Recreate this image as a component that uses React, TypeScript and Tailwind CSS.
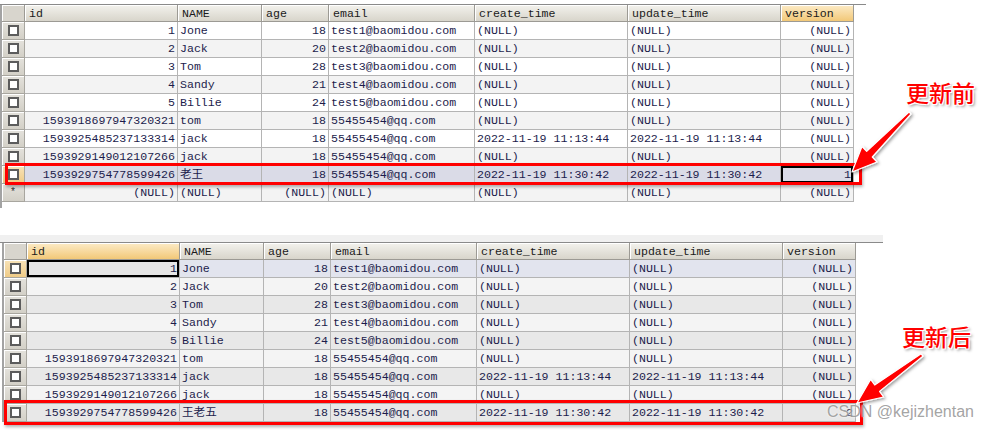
import React from 'react';

type Align = 'l' | 'r';

const columns: { name: string; align: Align }[] = [
  { name: 'id', align: 'r' },
  { name: 'NAME', align: 'l' },
  { name: 'age', align: 'r' },
  { name: 'email', align: 'l' },
  { name: 'create_time', align: 'l' },
  { name: 'update_time', align: 'l' },
  { name: 'version', align: 'r' },
];

const N = '(NULL)';

const baseRows: string[][] = [
  ['1', 'Jone', '18', 'test1@baomidou.com', N, N, N],
  ['2', 'Jack', '20', 'test2@baomidou.com', N, N, N],
  ['3', 'Tom', '28', 'test3@baomidou.com', N, N, N],
  ['4', 'Sandy', '21', 'test4@baomidou.com', N, N, N],
  ['5', 'Billie', '24', 'test5@baomidou.com', N, N, N],
  ['1593918697947320321', 'tom', '18', '55455454@qq.com', N, N, N],
  ['1593925485237133314', 'jack', '18', '55455454@qq.com', '2022-11-19 11:13:44', '2022-11-19 11:13:44', N],
  ['1593929149012107266', 'jack', '18', '55455454@qq.com', N, N, N],
];

const beforeRows = [
  ...baseRows,
  ['1593929754778599426', '老王', '18', '55455454@qq.com', '2022-11-19 11:30:42', '2022-11-19 11:30:42', '1'],
  [N, N, N, N, N, N, N],
];

const afterRows = [
  ...baseRows,
  ['1593929754778599426', '王老五', '18', '55455454@qq.com', '2022-11-19 11:30:42', '2022-11-19 11:30:42', '2'],
];

interface GridProps {
  rows: string[][];
  orangeCol: number;
  selRow: number;
  selCol: number;
  newRow?: boolean;
  variant: 'before' | 'after';
}

const Grid: React.FC<GridProps> = ({ rows, orangeCol, selRow, selCol, newRow, variant }) => {
  const rowBg = (i: number) => {
    if (i === selRow) return variant === 'before' ? 'bg-[#dadbe7]' : 'bg-[#e2e4ee]';
    if (variant === 'before') return i % 2 === 0 ? 'bg-white' : 'bg-[#f3f3f3]';
    return i % 2 === 0 ? 'bg-[#e8e8e8]' : 'bg-[#f4f4f4]';
  };

  return (
    <div className="grid grid-cols-[23px_153px_84px_67px_146px_153px_153px_73px] text-[11.6px] leading-[17px] text-[#1c1c4c]">
      <div className="h-[17px] border-r border-b border-[#9c9a94] bg-[#d8d5cd] shadow-[inset_1px_1px_0_#fff]" />
      {columns.map((c, ci) => (
        <div
          key={c.name}
          className={`h-[17px] pl-[4px] border-r border-b border-[#9c9a94] shadow-[inset_1px_1px_0_#fff] text-[#1a1a1a] ${
            ci === orangeCol
              ? 'bg-gradient-to-b from-[#fcebc6] to-[#f2c877]'
              : 'bg-gradient-to-b from-[#f3f2ed] to-[#d8d5cb]'
          }`}
        >
          {c.name}
        </div>
      ))}
      {rows.map((row, ri) => {
        const isNew = newRow && ri === rows.length - 1;
        return (
          <React.Fragment key={ri}>
            <div
              className={`h-[18px] border-r border-b border-[#a8a69f] shadow-[inset_1px_1px_0_#fff] flex items-center justify-center ${
                ri === selRow ? 'bg-gradient-to-b from-[#f8e3b8] to-[#efcb86]' : 'bg-gradient-to-b from-[#e4e2dc] to-[#d3d0c7]'
              }`}
            >
              {isNew ? (
                <span className="text-[10px] text-[#333] leading-none">*</span>
              ) : (
                <span className="w-[11px] h-[11px] border-2 border-[#5c5c5c] bg-white" />
              )}
            </div>
            {row.map((v, ci) => {
              const sel = ri === selRow && ci === selCol;
              return (
                <div
                  key={ci}
                  className={`h-[18px] border-r border-b border-[#b4b4b4] flex items-center overflow-hidden whitespace-nowrap ${
                    columns[ci].align === 'r' ? 'justify-end pr-[2px]' : 'pl-[2px]'
                  } ${sel ? 'shadow-[inset_0_0_0_2px_#000]' : ''} ${
                    sel && variant === 'after' ? 'bg-[#e6e6e6]' : rowBg(ri)
                  }`}
                >
                  {v}
                </div>
              );
            })}
          </React.Fragment>
        );
      })}
    </div>
  );
};

const Label: React.FC<{ text: string; className: string }> = ({ text, className }) => (
  <span
    className={`absolute font-['Noto_Sans_CJK_SC',sans-serif] font-medium text-[23px] leading-[24px] text-[#ff0000] [text-shadow:-1px_-1px_0_#fff,1px_-1px_0_#fff,-1px_1px_0_#fff,1px_1px_0_#fff,2px_2px_3px_rgba(0,0,0,0.45)] ${className}`}
  >
    {text}
  </span>
);

export default function App() {
  return (
    <div className="relative w-[987px] h-[432px] overflow-hidden bg-white font-['Liberation_Mono','Noto_Sans_CJK_SC',monospace]">
      {/* before update */}
      <div className="pt-[4px] h-[235px]">
        <div className="w-[866px] border-t border-[#8a8a8a]" />
        <div className="w-[856px] border-l-2 border-[#a3a3a3] pb-[6px]">
          <Grid rows={beforeRows} orangeCol={6} selRow={8} selCol={6} newRow variant="before" />
        </div>
      </div>

      {/* after update */}
      <div className="w-[883px] h-[7px] bg-[#f0f0f0]" />
      <div className="w-[883px] border-t border-[#8a8a8a]" />
      <div className="ml-[2px] w-[856px] border-l-2 border-[#a3a3a3]">
        <Grid rows={afterRows} orangeCol={0} selRow={0} selCol={0} variant="after" />
      </div>

      {/* annotations */}
      <div className="absolute left-[5px] top-[163px] w-[857px] h-[22px] border-[3px] border-[#f00] shadow-[1px_2px_3px_rgba(0,0,0,0.3)]" />
      <div className="absolute left-[4px] top-[400px] w-[859px] h-[25px] border-[3px] border-[#f00] shadow-[1px_2px_3px_rgba(0,0,0,0.3)]" />

      <Label text="更新前" className="left-[906px] top-[80px]" />
      <Label text="更新后" className="left-[902px] top-[324px]" />

      <svg className="absolute left-0 top-0 pointer-events-none" width="987" height="432">
        <defs>
          <filter id="sh" x="-20%" y="-20%" width="140%" height="140%">
            <feDropShadow dx="1.5" dy="1.5" stdDeviation="1.5" floodColor="#000" floodOpacity="0.4" />
          </filter>
        </defs>
        <polygon
          points="911,114 872.3,157 877,162 852,172 862,146.5 866.7,151.4 909,112"
          fill="#f00"
          stroke="#fff"
          strokeWidth="1.2"
          strokeLinejoin="round"
          filter="url(#sh)"
        />
        <polygon
          points="922.9,356.2 879.5,391.4 883.6,397 857,403 870.6,379.4 874.7,385 921.1,353.8"
          fill="#f00"
          stroke="#fff"
          strokeWidth="1.2"
          strokeLinejoin="round"
          filter="url(#sh)"
        />
      </svg>

      <span className="absolute left-[827px] top-[402px] font-['Liberation_Sans',sans-serif] text-[16px] leading-[20px] text-[#8c8c8c]/80 [text-shadow:0_0_2px_#fff]">
        CSDN @kejizhentan
      </span>
    </div>
  );
}
